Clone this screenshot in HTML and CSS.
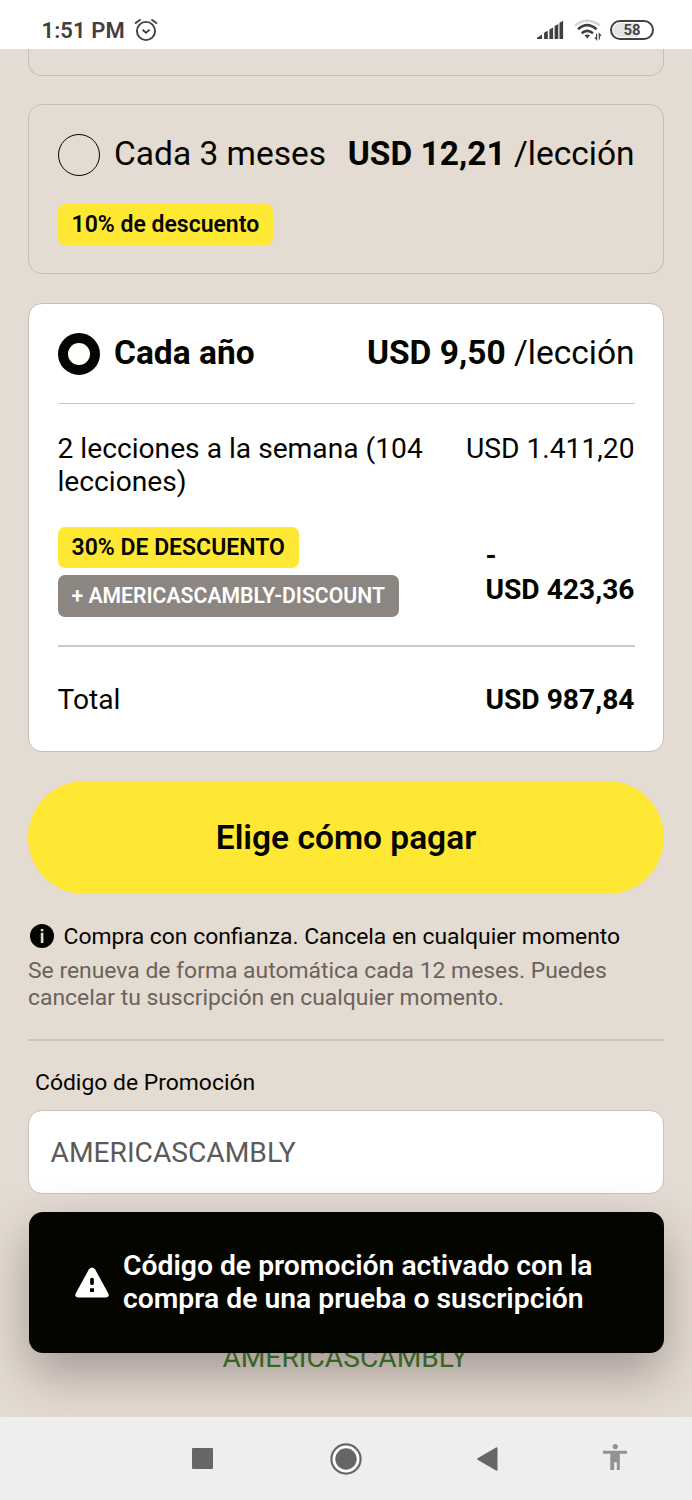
FILE: index.html
```html
<!DOCTYPE html>
<html lang="es">
<head>
<meta charset="utf-8">
<title>Elige tu plan</title>
<link rel="stylesheet" href="styles.css">
</head>
<body>
<div class="phone">
  <header class="status">
    <span class="clock">1:51 PM</span>
    <svg class="alarm" width="24" height="24" viewBox="0 0 24 24" fill="none" stroke="#404040" stroke-width="1.9">
      <circle cx="12" cy="13" r="9.1"/>
      <path d="M8.6 11.8l3.4 3 3.6-3.2"/>
      <path d="M1 5.6L6.6 1.4M23 5.6L17.4 1.4"/>
    </svg>
    <div class="signals">
      <svg width="28" height="20" viewBox="0 0 28 20" fill="#404040">
        <path d="M0 19v-1.2l5-3.3V19zM7.1 19v-6.300l3.700-2V19zM12.400 19V9.500l3.700-2V19zM17.600 19V6l3.700-2V19zM22.500 19V2.700L26.100 .7V19z"/>
      </svg>
      <svg width="28" height="22" viewBox="0 0 28 22" fill="none" stroke="#404040" stroke-width="2.600">
        <path d="M1 6.500Q13 -3 26 6.500" stroke="#d4d4d4" stroke-width="2.200"/>
        <path d="M4 10.300Q13 2 22.600 10.300M7.700 14.200Q13 9.500 19 14.200"/>
        <path d="M10.600 16.300q2.700-1.800 5.400 0L13.300 19.500z" fill="#404040" stroke="none"/>
        <path d="M22.600 14.800v5.600l-1.800-2M25.300 20.400v-5.600l1.800 2" stroke-width="1.200"/>
      </svg>
      <span class="battery"><span class="battery-text">58</span></span>
    </div>
  </header>

  <main class="page">
    <section class="plan plan-clipped"></section>

    <section class="plan plan-quarter">
      <div class="plan-head">
        <span class="radio"></span>
        <span class="plan-name">Cada 3 meses</span>
        <span class="price"><b>USD 12,21</b> <span class="unit">/lección</span></span>
      </div>
      <span class="badge badge-ten">10% de descuento</span>
    </section>

    <section class="plan plan-year">
      <div class="plan-head">
        <span class="radio radio-on"></span>
        <span class="plan-name plan-name-on">Cada año</span>
        <span class="price"><b>USD 9,50</b> <span class="unit">/lección</span></span>
      </div>
      <div class="row row-lessons">
        <span>2 lecciones a la semana (104<br>lecciones)</span>
        <span class="gross">USD 1.411,20</span>
      </div>
      <div class="row row-discount">
        <div class="badges">
          <span class="badge badge-thirty">30% DE DESCUENTO</span>
          <span class="badge badge-code">+ AMERICASCAMBLY-DISCOUNT</span>
        </div>
        <b class="amount">-<br>USD 423,36</b>
      </div>
      <div class="row row-total">
        <span class="total-label">Total</span>
        <b class="amount">USD 987,84</b>
      </div>
    </section>

    <button class="pay">Elige cómo pagar</button>

    <div class="trust">
      <svg width="24" height="24" viewBox="0 0 24 24">
        <circle cx="12" cy="12" r="12" fill="#050500"/>
        <path d="M10.800 5h2.600v2.200h-2.600zM10.800 8.800h2.600V19h-2.600z" fill="#e4dbd2"/>
      </svg>
      <span>Compra con confianza. Cancela en cualquier momento</span>
    </div>
    <p class="renewal">Se renueva de forma automática cada 12 meses. Puedes<br>cancelar tu suscripción en cualquier momento.</p>

    <label class="promo-label" for="promo">Código de Promoción</label>
    <input class="promo" id="promo" type="text" value="AMERICASCAMBLY">

    <p class="applied">AMERICASCAMBLY</p>

    <div class="toast">
      <svg width="34" height="31" viewBox="0 0 34 31">
        <path d="M14 2.200q3-3.600 6 0l13.200 24q1.600 4-2 4.300H2.800q-3.600-.3-2-4.300z" fill="#fff"/>
        <path d="M17 10.700q1.900 0 1.900 1.900v3.600q0 1.900-1.900 1.900t-1.900-1.900v-3.600q0-1.900 1.900-1.900zM15 21.300h4v3.700h-4z" fill="#050500"/>
      </svg>
      <span class="toast-text">Código de promoción activado con la<br>compra de una prueba o suscripción</span>
    </div>
  </main>

  <nav class="navbar">
    <svg class="nav-recent" width="21" height="21" viewBox="0 0 21 21"><rect width="21" height="21" rx="1" fill="#666"/></svg>
    <svg class="nav-home" width="32" height="32" viewBox="0 0 32 32"><circle cx="16" cy="16" r="14.600" fill="#fff" stroke="#666" stroke-width="2.200"/><circle cx="16" cy="16" r="10.700" fill="#666"/></svg>
    <svg class="nav-back" width="21" height="24" viewBox="0 0 21 24"><path d="M.6 11.300L19 .5q1.500-.6 1.500.8v21.400q0 1.400-1.500.8L.6 12.700q-.8-.7 0-1.400z" fill="#666"/></svg>
    <svg class="nav-access" width="24" height="26" viewBox="0 0 24 26" fill="#929292"><circle cx="12.300" cy="2.600" r="2.600"/><path d="M0 6.800h24v3h-7.200V26h-3v-7.800h-2.600V26H7.300V9.800H0z"/></svg>
  </nav>
</div>
</body>
</html>
```

FILE: styles.css
```css
* { box-sizing: border-box; }

body {
  margin: 0;
  font-family: Roboto, "Liberation Sans", sans-serif;
  color: #050500;
}

b { font-weight: 700; }

.phone {
  width: 692px;
  height: 1500px;
  display: flex;
  flex-direction: column;
  overflow: hidden;
  background: #e4dbd2;
}

.status {
  height: 49px;
  flex: none;
  display: flex;
  align-items: center;
  padding: 12px 38px 0 41.5px;
  background: #fff;
  color: #404040;
}

.clock {
  font-size: 22px;
  line-height: 26px;
  font-weight: 600;
  letter-spacing: 0.1px;
}

.alarm { margin: -2px 0 0 9px; }

.signals {
  display: flex;
  align-items: center;
  gap: 8.5px;
  margin-left: auto;
}

.signals svg { margin-top: -1px; }

.battery {
  width: 44px;
  height: 20px;
  margin-top: -1px;
  padding: 1px;
  border: 2px solid #404040;
  border-radius: 10px;
  background: linear-gradient(to right, #e4e4e4 66%, #fff 66%) content-box;
  text-align: center;
}

.battery-text {
  display: block;
  font-size: 15px;
  line-height: 15px;
  font-weight: 600;
}

.page {
  position: relative;
  height: 1368px;
  flex: none;
  padding: 0 28px;
  display: flex;
  flex-direction: column;
  overflow: hidden;
}

.plan {
  flex: none;
  border: 1px solid #c6bdb5;
  border-radius: 14px;
  padding: 0 28.5px;
}

.plan-clipped {
  height: 27px;
  border-top: 0;
  border-radius: 0 0 14px 14px;
}

.plan-quarter {
  height: 170px;
  margin-top: 28px;
}

.plan-year {
  height: 449px;
  margin-top: 29px;
  background: #fff;
}

.plan-head {
  display: flex;
  align-items: center;
  height: 99px;
  font-size: 33.5px;
  white-space: nowrap;
}

.radio {
  width: 42px;
  height: 42px;
  border: 1px solid #050500;
  border-radius: 50%;
}

.radio-on { border-width: 10px; }

.plan-name {
  margin-left: 14.5px;
  padding-bottom: 2px;
}

.plan-name-on { font-weight: 700; }

.price {
  margin-left: auto;
  padding-bottom: 2px;
}

.badge {
  display: block;
  width: max-content;
  height: 41px;
  padding: 0 14px;
  border-radius: 7px;
  background: #ffe833;
  font-size: 23px;
  line-height: 41px;
  font-weight: 600;
}

.badge-code {
  height: 42px;
  line-height: 42px;
  margin-top: 7px;
  background: #8b8681;
  color: #fff;
  font-size: 21.2px;
}

.row {
  display: flex;
  justify-content: space-between;
  font-size: 28.2px;
  line-height: 33px;
  white-space: nowrap;
}

.row-lessons {
  height: 124px;
  padding-top: 28px;
  border-top: 1px solid #c6c4c3;
}

.row-discount { height: 118px; }

.row-discount .amount {
  padding-top: 12px;
  line-height: 34px;
}

.row-total {
  padding-top: 36px;
  border-top: 2px solid #cccac9;
}

.pay {
  flex: none;
  height: 113px;
  margin: 29px 0 0;
  padding: 0;
  border: 0;
  border-radius: 57px;
  background: #ffe833;
  color: #050500;
  font: 600 33.5px/113px Roboto, "Liberation Sans", sans-serif;
}

.trust {
  display: flex;
  align-items: center;
  height: 30px;
  margin-top: 27px;
  padding-left: 2px;
  gap: 9.5px;
  font-size: 22.9px;
  white-space: nowrap;
}

.renewal {
  height: 84px;
  margin: 6px 0 0;
  border-bottom: 2px solid #cbc2ba;
  color: #6b625c;
  font-size: 22.9px;
  line-height: 27px;
  white-space: nowrap;
}

.promo-label {
  height: 27px;
  margin: 28px 0 0 7px;
  font-size: 22.9px;
  line-height: 27px;
}

.promo {
  flex: none;
  height: 84px;
  margin: 14px 0 0;
  padding: 0 21.5px;
  border: 1px solid #cbc2ba;
  border-radius: 14px;
  background: #fff;
  color: #5c5a58;
  font: 28.2px Roboto, "Liberation Sans", sans-serif;
}

.applied {
  margin: 147px 2px 0 0;
  color: #37791f;
  font-size: 28.2px;
  line-height: 33px;
  text-align: center;
}

/* Notification floating over the form */
.toast {
  position: absolute;
  left: 28.5px;
  right: 28.5px;
  bottom: 64px;
  height: 141px;
  display: flex;
  align-items: center;
  padding-left: 46.5px;
  gap: 14px;
  border-radius: 14px;
  background: #050500;
  box-shadow: 0 21px 50px rgba(60, 45, 45, 0.38);
  color: #fff;
}

.toast-text {
  padding-bottom: 2px;
  font-size: 28.3px;
  line-height: 33px;
  font-weight: 600;
  white-space: nowrap;
}

.navbar {
  height: 83px;
  flex: none;
  display: flex;
  align-items: center;
  padding: 0 65px 0 192px;
  background: #eee;
}

.nav-home { margin-left: 117px; }
.nav-back { margin-left: 115px; }
.nav-access { margin-left: 105px; margin-top: -4px; }
```
